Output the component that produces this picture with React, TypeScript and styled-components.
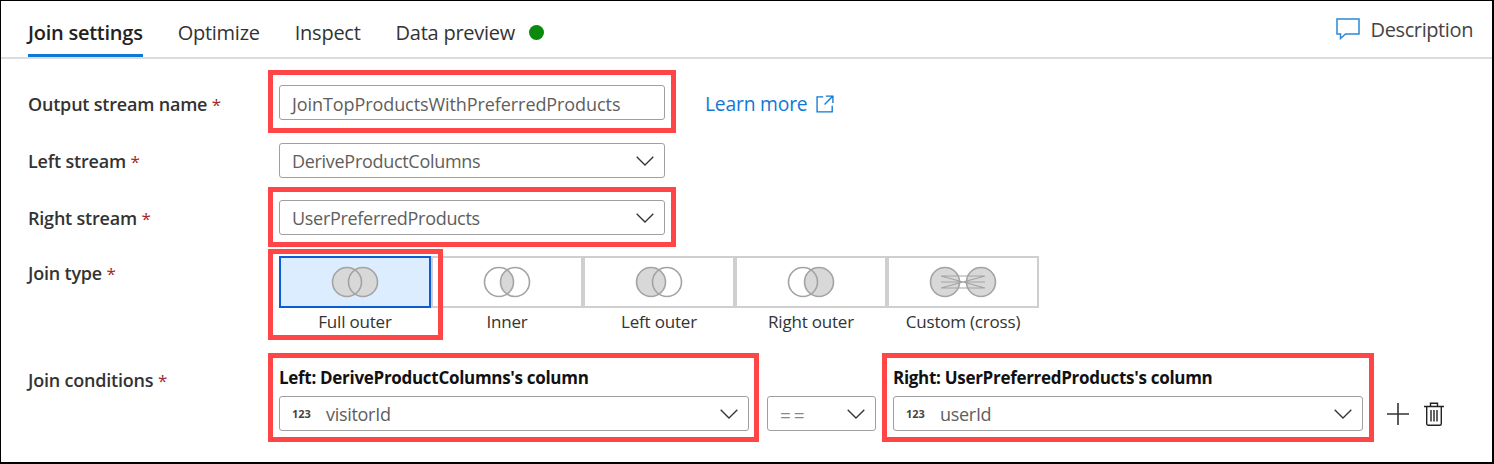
import React from "react";
import styled, { createGlobalStyle } from "styled-components";

const GlobalStyle = createGlobalStyle`
  html, body {
    margin: 0;
    padding: 0;
    background: #fff;
  }
  body {
    font-family: "Open Sans", "Noto Sans", "Liberation Sans", sans-serif;
    color: #262626;
  }
`;

type JoinKind = "full" | "inner" | "left" | "right" | "cross";

const JOIN_TYPES: { kind: JoinKind; label: string }[] = [
  { kind: "full", label: "Full outer" },
  { kind: "inner", label: "Inner" },
  { kind: "left", label: "Left outer" },
  { kind: "right", label: "Right outer" },
  { kind: "cross", label: "Custom (cross)" },
];

const VennIcon = ({ kind }: { kind: JoinKind }) => {
  const stroke = "#a3a3a3";
  const fill = "#d8d8d8";
  if (kind === "cross") {
    return (
      <svg width="68" height="32" viewBox="0 0 68 32" fill="none">
        <circle cx="16" cy="16" r="14.5" fill={fill} stroke={stroke} strokeWidth="1.6" />
        <circle cx="52" cy="16" r="14.5" fill={fill} stroke={stroke} strokeWidth="1.6" />
        <path d="M12 10h44M12 22h44M12 10l44 12M12 22l44-12M12 16h44" stroke={stroke} strokeWidth="1.2" />
      </svg>
    );
  }
  const lens = "M24 4.1a14.5 14.5 0 0 1 0 23.8a14.5 14.5 0 0 1 0-23.8z";
  return (
    <svg width="48" height="32" viewBox="0 0 48 32" fill="none">
      <circle cx="16" cy="16" r="14.5" fill={kind === "full" || kind === "left" ? fill : "#fff"} />
      <circle cx="32" cy="16" r="14.5" fill={kind === "full" || kind === "right" ? fill : "#fff"} />
      <path d={lens} fill={fill} />
      <circle cx="16" cy="16" r="14.5" stroke={stroke} strokeWidth="1.6" />
      <circle cx="32" cy="16" r="14.5" stroke={stroke} strokeWidth="1.6" />
    </svg>
  );
};

const Chevron = () => (
  <ChevronSlot>
    <svg width="18" height="10" viewBox="0 0 18 10" fill="none">
      <path d="M0.7 0.7L9 9L17.3 0.7" stroke="#333" strokeWidth="1.3" />
    </svg>
  </ChevronSlot>
);

const App = () => (
  <>
    <GlobalStyle />
    <Frame>
      <TabBar>
        <Tabs>
          <Tab $active>Join settings</Tab>
          <Tab>Optimize</Tab>
          <Tab>Inspect</Tab>
          <Tab>
            Data preview
            <StatusDot />
          </Tab>
        </Tabs>
        <DescriptionButton>
          <svg width="24" height="22" viewBox="0 0 24 22" fill="none">
            <path d="M1 1h22v15H9.5l-5 4.5V16H1z" stroke="#2b88d8" strokeWidth="1.5" />
          </svg>
          Description
        </DescriptionButton>
      </TabBar>

      <Form>
        <Row $top={26}>
          <OutputLabel>
            Output stream name <Star>*</Star>
          </OutputLabel>
          <Highlight $w={408} $h={63} $dx={-11} $dy={-15}>
            <NameField>JoinTopProductsWithPreferredProducts</NameField>
          </Highlight>
          <LearnMore href="#">
            Learn more
            <svg width="18" height="18" viewBox="0 0 20 20" fill="none">
              <path d="M8 2H1.2v16.8H18V12M11 1.2h7.8V9M18.5 1.5L9.5 10.5" stroke="#0f78d4" strokeWidth="1.5" />
            </svg>
          </LearnMore>
        </Row>

        <Row $top={23}>
          <Label>
            Left stream <Star>*</Star>
          </Label>
          <Field>
            DeriveProductColumns
            <Chevron />
          </Field>
        </Row>

        <Row $top={22}>
          <Label>
            Right stream <Star>*</Star>
          </Label>
          <Highlight $w={408} $h={60} $dx={-11} $dy={-13}>
            <Field>
              UserPreferredProducts
              <Chevron />
            </Field>
          </Highlight>
        </Row>

        <JoinRow>
          <JoinTypeLabel>
            Join type <Star>*</Star>
          </JoinTypeLabel>
          <JoinTiles>
            {JOIN_TYPES.map(({ kind, label }) => (
              <JoinOption key={kind}>
                <JoinTile $selected={kind === "full"}>
                  <VennIcon kind={kind} />
                </JoinTile>
                <JoinLabel>{label}</JoinLabel>
              </JoinOption>
            ))}
            <JoinHighlight />
          </JoinTiles>
        </JoinRow>

        <ConditionRow>
          <ConditionLabel>
            Join conditions <Star>*</Star>
          </ConditionLabel>
          <Highlight $w={491} $h={89} $dx={-11} $dy={-13}>
            <ConditionColumn>
              <ColumnTitle>Left: DeriveProductColumns's column</ColumnTitle>
              <ColumnField>
                <TypeTag>123</TypeTag>
                visitorId
                <Chevron />
              </ColumnField>
            </ConditionColumn>
          </Highlight>
          <OperatorField>
            <OperatorText>==</OperatorText>
            <Chevron />
          </OperatorField>
          <Highlight $w={492} $h={89} $dx={-11} $dy={-13}>
            <ConditionColumn>
              <ColumnTitle>Right: UserPreferredProducts's column</ColumnTitle>
              <ColumnField>
                <TypeTag>123</TypeTag>
                userId
                <Chevron />
              </ColumnField>
            </ConditionColumn>
          </Highlight>
          <RowActions>
            <svg width="22" height="22" viewBox="0 0 22 22" fill="none">
              <path d="M11 0v22M0 11h22" stroke="#333" strokeWidth="1.6" />
            </svg>
            <svg width="20" height="24" viewBox="0 0 20 24" fill="none" stroke="#222" strokeWidth="1.4">
              <path d="M0 4.5h20M6.5 4.5V1.2h7v3.3" />
              <path d="M2.7 4.5v17.2a1.5 1.5 0 0 0 1.5 1.5h11.6a1.5 1.5 0 0 0 1.5-1.5V4.5" />
              <path d="M7 8v11.5M10 8v11.5M13 8v11.5" />
            </svg>
          </RowActions>
        </ConditionRow>
      </Form>
    </Frame>
  </>
);

const Frame = styled.div`
  box-sizing: border-box;
  width: 1494px;
  height: 464px;
  overflow: hidden;
  background: #fff;
  border-style: solid;
  border-color: #000;
  border-width: 1px 2px 2px 1px;
`;

const TabBar = styled.div`
  display: flex;
  justify-content: space-between;
  height: 56px;
  border-bottom: 2px solid #dcdcdc;
`;

const Tabs = styled.div`
  display: flex;
  gap: 35px;
  padding-left: 27px;
`;

const Tab = styled.div<{ $active?: boolean }>`
  display: flex;
  align-items: center;
  height: 56px;
  padding-top: 9px;
  box-sizing: border-box;
  font-size: 20px;
  letter-spacing: -0.25px;
  font-weight: ${(p) => (p.$active ? 600 : 400)};
  color: ${(p) => (p.$active ? "#222" : "#333")};
  border-bottom: 3px solid ${(p) => (p.$active ? "#0f78d4" : "transparent")};
  margin-bottom: -2px;
`;

const StatusDot = styled.span`
  width: 15px;
  height: 15px;
  margin-left: 14px;
  border-radius: 50%;
  background: #0a8a0a;
`;

const DescriptionButton = styled.div`
  display: flex;
  align-items: center;
  gap: 11px;
  height: 56px;
  padding: 0 19px 0 24px;
  box-sizing: border-box;
  font-size: 20px;
  letter-spacing: -0.4px;
  color: #444;
`;

const Form = styled.div`
  display: flex;
  flex-direction: column;
  padding-left: 27px;
`;

const Row = styled.div<{ $top: number }>`
  display: flex;
  align-items: center;
  height: 35px;
  margin-top: ${(p) => p.$top}px;
`;

const Label = styled.div`
  width: 251px;
  flex: none;
  font-size: 18px;
  font-weight: 600;
  letter-spacing: -0.2px;
  color: #333;
`;

const OutputLabel = styled(Label)`
  padding-top: 2px;
`;

const JoinTypeLabel = styled(Label)`
  padding-top: 5px;
`;

const Star = styled.span`
  font-size: 17px;
  color: #a4262c;
  font-weight: 400;
`;

const Highlight = styled.div<{ $w: number; $h: number; $dx: number; $dy: number }>`
  position: relative;
  &::after {
    content: "";
    position: absolute;
    left: ${(p) => p.$dx}px;
    top: ${(p) => p.$dy}px;
    width: ${(p) => p.$w}px;
    height: ${(p) => p.$h}px;
    box-sizing: border-box;
    border: 5px solid #ff4545;
    pointer-events: none;
  }
`;

const Field = styled.div`
  display: flex;
  align-items: center;
  box-sizing: border-box;
  width: 386px;
  height: 35px;
  padding: 0 12px;
  border: 1.5px solid #a0a0a0;
  border-radius: 3px;
  font-size: 18px;
  letter-spacing: -0.3px;
  color: #605e5c;
  background: #fff;
`;

const NameField = styled(Field)`
  padding-top: 2px;
  letter-spacing: -0.08px;
`;

const ChevronSlot = styled.span`
  display: flex;
  margin-left: auto;
  margin-right: -2px;
`;

const LearnMore = styled.a`
  display: flex;
  align-items: center;
  gap: 9px;
  margin-left: 40px;
  padding-top: 2px;
  font-size: 19.3px;
  letter-spacing: -0.2px;
  color: #0f78d4;
  text-decoration: none;
`;

const JoinRow = styled.div`
  display: flex;
  margin-top: 21px;
`;

const JoinTiles = styled.div`
  position: relative;
  display: flex;
`;

const JoinHighlight = styled.div`
  position: absolute;
  left: -11px;
  top: -7px;
  width: 175px;
  height: 91px;
  box-sizing: border-box;
  border: 5px solid #ff4545;
  pointer-events: none;
`;

const JoinOption = styled.div`
  width: 152px;
  display: flex;
  flex-direction: column;
  align-items: center;
`;

const JoinTile = styled.div<{ $selected?: boolean }>`
  display: flex;
  align-items: center;
  justify-content: center;
  box-sizing: border-box;
  width: 152px;
  height: 52px;
  border: 2px solid ${(p) => (p.$selected ? "#0b5cd5" : "#cfcfcf")};
  background: ${(p) => (p.$selected ? "#dcedff" : "#fff")};
`;

const JoinLabel = styled.div`
  margin-top: 2px;
  font-size: 17px;
  line-height: 24px;
  letter-spacing: -0.2px;
  color: #333;
`;

const ConditionRow = styled.div`
  display: flex;
  align-items: flex-end;
  height: 74px;
  margin-top: 23px;
`;

const ConditionLabel = styled(Label)`
  align-self: flex-start;
  padding-top: 11px;
`;

const ConditionColumn = styled.div`
  display: flex;
  flex-direction: column;
  width: 470px;
`;

const ColumnTitle = styled.div`
  height: 30px;
  font-size: 17px;
  line-height: 24px;
  font-weight: 700;
  letter-spacing: -0.3px;
  color: #111;
`;

const ColumnField = styled(Field)`
  width: 470px;
`;

const TypeTag = styled.span`
  width: 34px;
  flex: none;
  font-size: 11px;
  font-weight: 700;
  letter-spacing: 0;
  color: #444;
`;

const OperatorField = styled(Field)`
  width: 109px;
  margin: 0 17px 0 18px;
`;

const OperatorText = styled.span`
  padding-top: 3px;
  font-size: 19px;
  letter-spacing: 3px;
  color: #8a8a8a;
`;

const RowActions = styled.div`
  display: flex;
  align-items: center;
  gap: 15px;
  height: 35px;
  margin-left: 24px;
`;

export default App;
